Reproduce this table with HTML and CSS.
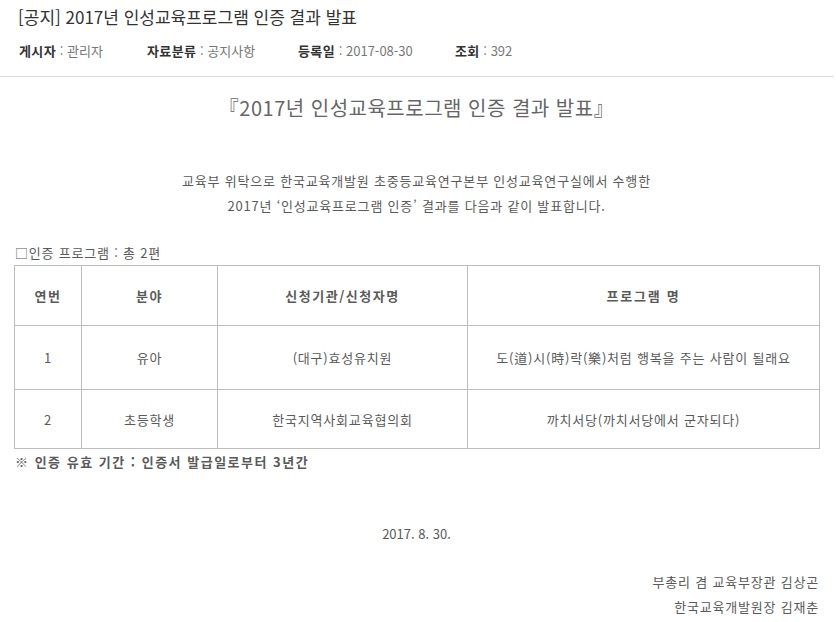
FILE: index.html
```html
<!DOCTYPE html>
<html lang="ko">
<head>
<meta charset="utf-8">
<title>[공지] 2017년 인성교육프로그램 인증 결과 발표</title>
<link rel="stylesheet" href="styles.css">
</head>
<body>
<div class="post-head">
  <h1 class="post-title">[공지] 2017년 인성교육프로그램 인증 결과 발표</h1>
  <ul class="meta">
    <li class="meta-item m1"><b>게시자</b> : 관리자</li>
    <li class="meta-item m2"><b>자료분류</b> : 공지사항</li>
    <li class="meta-item m3"><b>등록일</b> : 2017-08-30</li>
    <li class="meta-item m4"><b>조회</b> : 392</li>
  </ul>
</div>
<div class="post-body">
  <h2 class="doc-title">『2017년 인성교육프로그램 인증 결과 발표』</h2>
  <p class="intro">교육부 위탁으로 한국교육개발원 초중등교육연구본부 인성교육연구실에서 수행한<br>2017년 ‘인성교육프로그램 인증’ 결과를 다음과 같이 발표합니다.</p>
  <p class="label">□인증 프로그램 : 총 2편</p>
  <table class="cert">
    <colgroup>
      <col class="c1"><col class="c2"><col class="c3"><col class="c4">
    </colgroup>
    <thead>
      <tr class="r-head"><th>연번</th><th>분야</th><th>신청기관/신청자명</th><th class="wide">프로그램 명</th></tr>
    </thead>
    <tbody>
      <tr class="r1"><td>1</td><td>유아</td><td>(대구)효성유치원</td><td>도(道)시(時)락(樂)처럼 행복을 주는 사람이 될래요</td></tr>
      <tr class="r2"><td>2</td><td>초등학생</td><td>한국지역사회교육협의회</td><td>까치서당(까치서당에서 군자되다)</td></tr>
    </tbody>
  </table>
  <p class="note">※ 인증 유효 기간 : 인증서 발급일로부터 3년간</p>
  <p class="date">2017. 8. 30.</p>
  <div class="sign">
    <p>부총리 겸 교육부장관 김상곤</p>
    <p>한국교육개발원장 김재춘</p>
  </div>
</div>
</body>
</html>
```

FILE: styles.css
```css
* { box-sizing: border-box; }
html, body { margin: 0; padding: 0; background: #fff; }
body {
  font-family: "Noto Sans CJK KR", "Noto Sans", sans-serif;
  color: #5a5a5a;
  width: 836px;
}
.post-head {
  border-bottom: 1px solid #dcdcdc;
  margin-right: 2px;
  padding: 5px 0 15px 18px;
}
.post-title {
  margin: 0;
  font-size: 17px;
  line-height: 24px;
  font-weight: 400;
  color: #333;
}
.meta {
  list-style: none;
  margin: 12px 0 0;
  padding: 0 0 0 1px;
  display: flex;
  font-size: 13px;
  line-height: 20px;
  color: #777;
}
.meta b { color: #333; font-weight: 700; letter-spacing: 0.4px; }
.m1 { width: 128px; }
.m2 { width: 151px; }
.m3 { width: 157px; }
.post-body {
  padding: 0 17px 0 14px;
  font-size: 13px;
  letter-spacing: 0.8px;
}
.doc-title {
  margin: 17px 0 0;
  text-align: center;
  font-size: 20px;
  line-height: 28px;
  font-weight: 400;
  letter-spacing: 0.5px;
  color: #666;
}
.intro {
  margin: 46px 0 0;
  text-align: center;
  line-height: 25px;
}
.label {
  margin: 25px 0 0 1px;
  line-height: 20px;
}
.cert {
  margin-top: 2px;
  width: 805px;
  border-collapse: collapse;
  table-layout: fixed;
  color: #5a5a5a;
}
.c1 { width: 67px; }
.c2 { width: 136px; }
.c3 { width: 250px; }
.c4 { width: 352px; }
.cert th, .cert td {
  border: 1px solid #bdbdbd;
  text-align: center;
  padding: 0;
  font-size: 13px;
}
.cert th { font-weight: 700; letter-spacing: 1.5px; }
.cert th.wide { letter-spacing: 1.8px; }
.r-head { height: 60px; }
.r1 { height: 64px; }
.r2 { height: 59px; }
.note {
  margin: 3px 0 0 1px;
  line-height: 20px;
  font-weight: 700;
  letter-spacing: 1.5px;
}
.date {
  margin: 52px 0 0;
  text-align: center;
  line-height: 20px;
  letter-spacing: 0;
}
.sign { margin-top: 25px; text-align: right; }
.sign p { margin: 0; line-height: 25px; }
```
